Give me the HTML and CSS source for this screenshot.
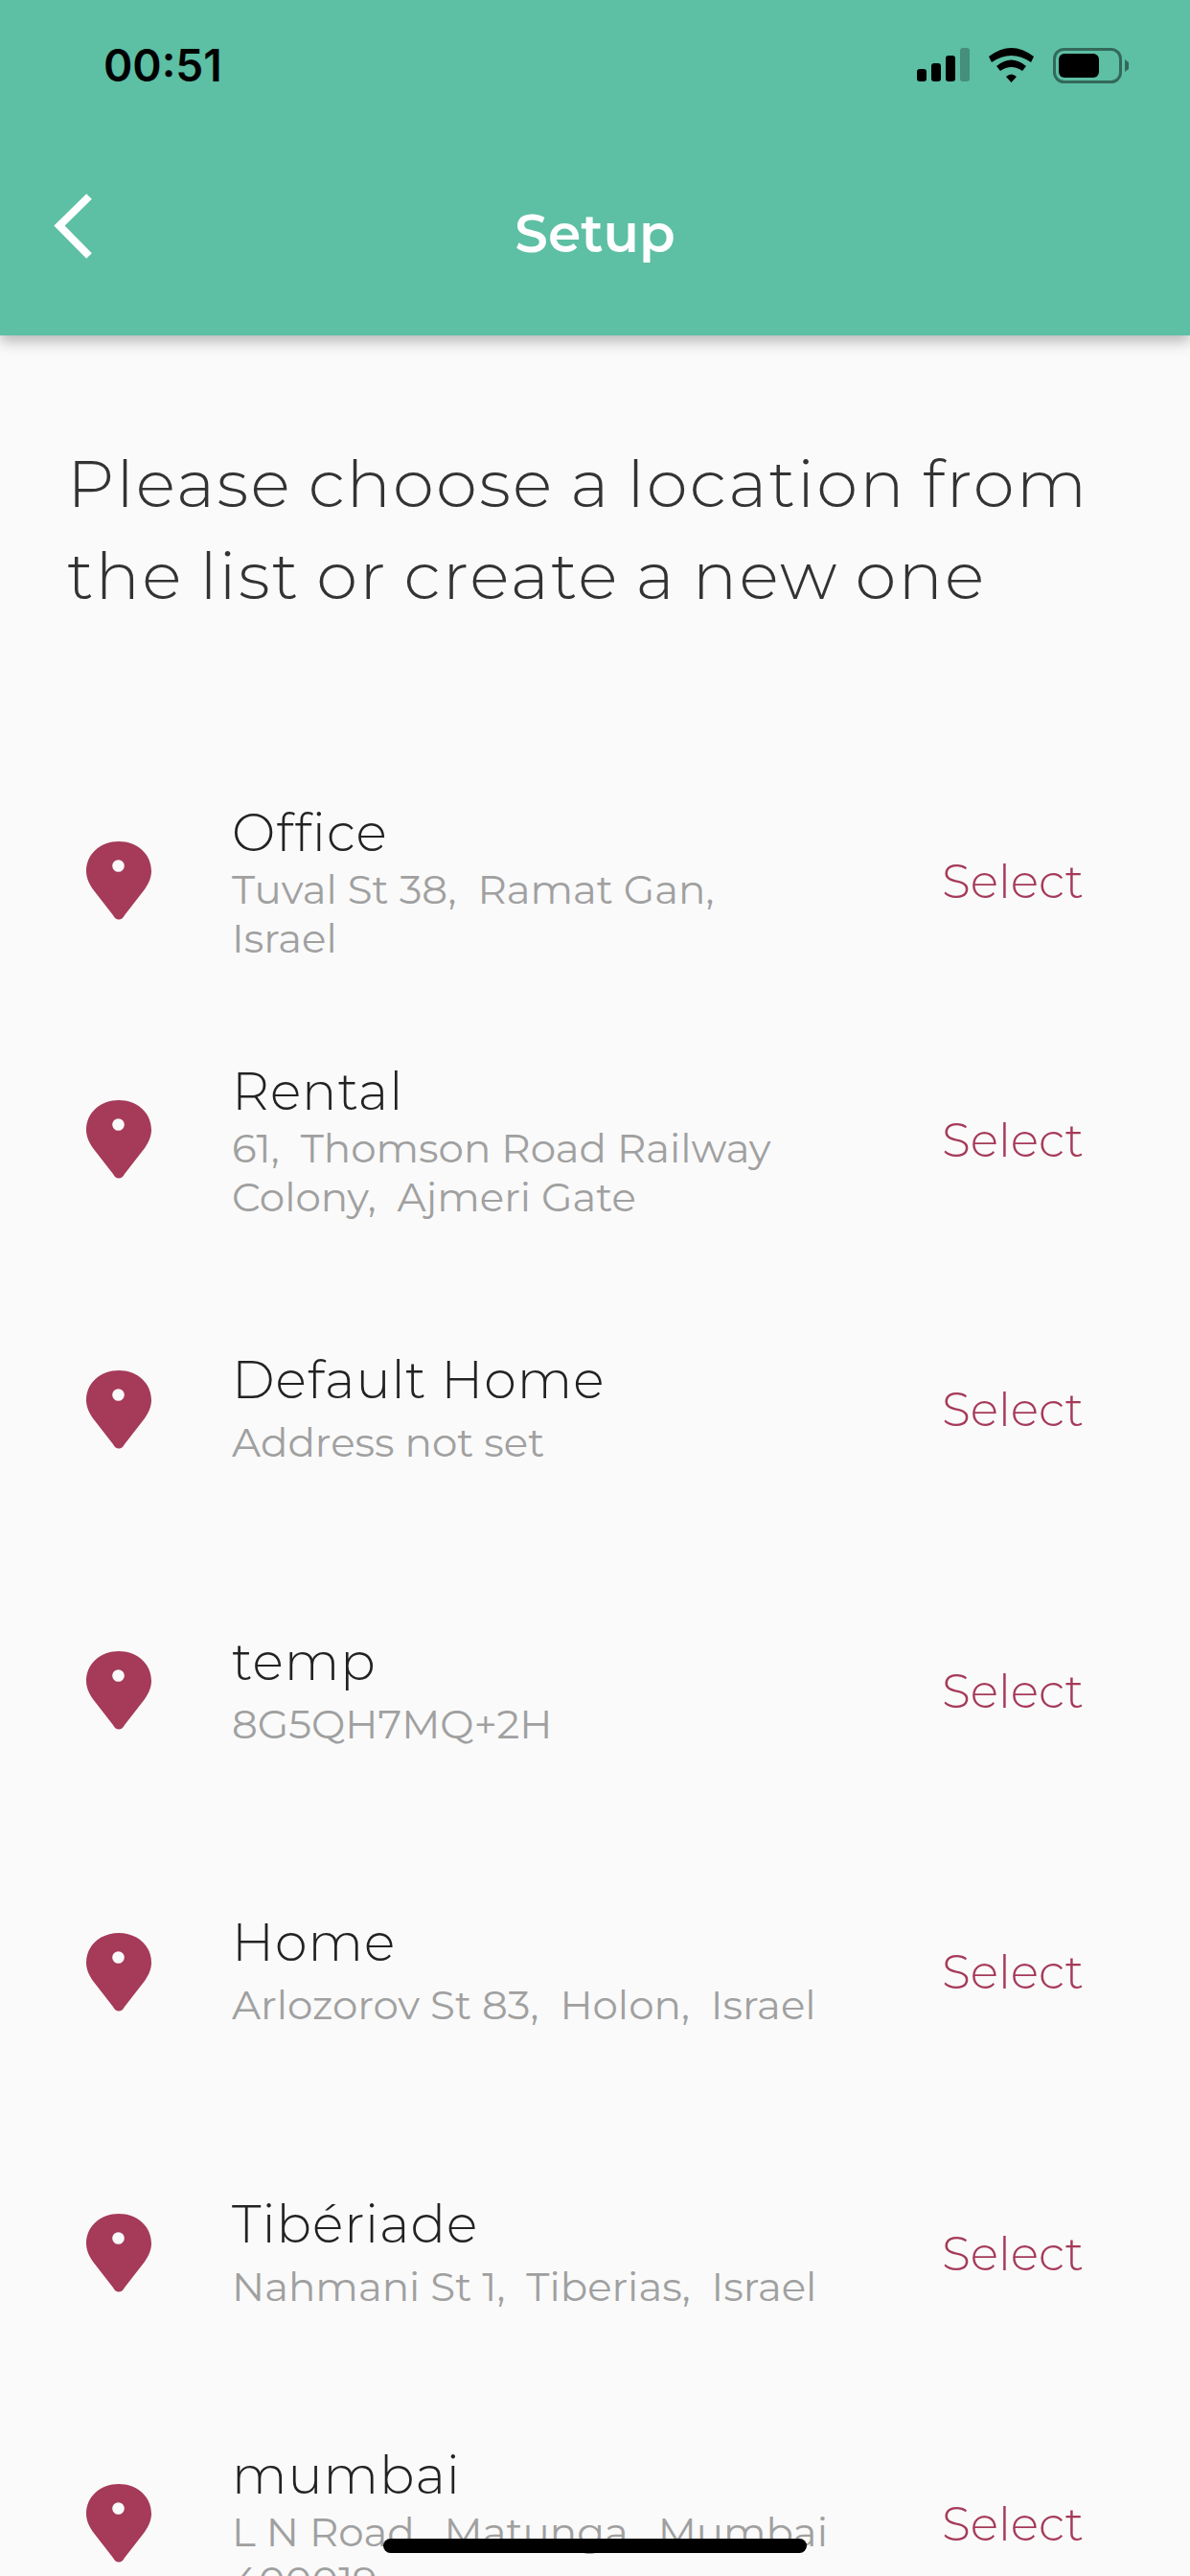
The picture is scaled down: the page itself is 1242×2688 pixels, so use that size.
FILE: index.html
```html
<!DOCTYPE html>
<html lang="en">
  <head>
    <meta charset="UTF-8" />
    <title>Setup</title>
    <link rel="stylesheet" href="styles.css">
  </head>
  <body>
    <svg class="defs" width="0" height="0">
      <symbol id="pin" viewBox="0 0 68 82">
        <path d="M34 0 C15 0 0 13 0 31 C0 38 3 44 7 50 L28 77 C31 83 37 83 40 77 L61 50 C65 44 68 38 68 31 C68 13 53 0 34 0 Z" fill="#a53a59"/>
        <circle cx="33.500" cy="25.500" r="6.300" fill="#fafafa"/>
      </symbol>
    </svg>

    <header class="app-header">
      <div class="status-bar">
        <span class="clock">00:51</span>
        <div class="status-icons">
          <svg width="55" height="36" viewBox="0 0 55 36"><rect x="0" y="22" width="10" height="13" rx="3" fill="#000"/><rect x="15" y="16" width="10" height="19" rx="3" fill="#000"/><rect x="30" y="8" width="10" height="27" rx="3" fill="#000"/><rect x="45" y="0" width="10" height="35" rx="3" fill="#000" opacity="0.25"/></svg>
          <svg width="47" height="36" viewBox="0 0 47 36"><path d="M0 9 Q23.500 -9 47 9 L44 15 Q23.500 1 3 15 Z M8 19 Q23.500 6 39 19 L35 24 Q23.500 16 12 24 Z M18 30 Q23.500 25 29 30 L23.500 36 Z" fill="#000"/></svg>
          <svg width="79" height="37" viewBox="0 0 79 37"><rect x="1.500" y="1.500" width="69" height="34" rx="10" fill="none" stroke="#000" stroke-opacity="0.45" stroke-width="3"/><rect x="6" y="6" width="42" height="25" rx="6" fill="#000"/><path d="M75 12 L79 15 V22 L75 25 Z" fill="#000" opacity="0.45"/></svg>
        </div>
      </div>
      <div class="nav-bar">
        <svg class="back" width="44" height="72" viewBox="0 0 44 72"><path d="M38 5 L7 35.500 L38 67" fill="none" stroke="#fff" stroke-width="8"/></svg>
        <h1 class="nav-title">Setup</h1>
      </div>
    </header>

    <main class="content">
      <p class="intro">Please choose a location from the list or create a new one</p>

      <ul class="locations">
        <li class="location two-line">
          <svg class="pin"><use href="#pin"/></svg>
          <div class="loc-text">
            <div class="loc-name">Office</div>
            <div class="loc-addr">Tuval St 38,&nbsp; Ramat Gan,<br>Israel</div>
          </div>
          <span class="select">Select</span>
        </li>
        <li class="location two-line">
          <svg class="pin"><use href="#pin"/></svg>
          <div class="loc-text">
            <div class="loc-name">Rental</div>
            <div class="loc-addr">61,&nbsp; Thomson Road Railway<br>Colony,&nbsp; Ajmeri Gate</div>
          </div>
          <span class="select">Select</span>
        </li>
        <li class="location">
          <svg class="pin"><use href="#pin"/></svg>
          <div class="loc-text">
            <div class="loc-name">Default Home</div>
            <div class="loc-addr">Address not set</div>
          </div>
          <span class="select">Select</span>
        </li>
        <li class="location">
          <svg class="pin"><use href="#pin"/></svg>
          <div class="loc-text">
            <div class="loc-name">temp</div>
            <div class="loc-addr">8G5QH7MQ+2H</div>
          </div>
          <span class="select">Select</span>
        </li>
        <li class="location">
          <svg class="pin"><use href="#pin"/></svg>
          <div class="loc-text">
            <div class="loc-name">Home</div>
            <div class="loc-addr">Arlozorov St 83,&nbsp; Holon,&nbsp; Israel</div>
          </div>
          <span class="select">Select</span>
        </li>
        <li class="location">
          <svg class="pin"><use href="#pin"/></svg>
          <div class="loc-text">
            <div class="loc-name">Tibériade</div>
            <div class="loc-addr">Nahmani St 1,&nbsp; Tiberias,&nbsp; Israel</div>
          </div>
          <span class="select">Select</span>
        </li>
        <li class="location two-line">
          <svg class="pin"><use href="#pin"/></svg>
          <div class="loc-text">
            <div class="loc-name">mumbai</div>
            <div class="loc-addr">L N Road,&nbsp; Matunga,&nbsp; Mumbai<br>400019</div>
          </div>
          <span class="select">Select</span>
        </li>
      </ul>
    </main>

    <div class="home-indicator"></div>
  </body>
</html>
```

FILE: styles.css
```css
html, body {
  margin: 0;
  padding: 0;
}

body {
  position: relative;
  width: 1242px;
  height: 2688px;
  overflow: hidden;
  background-color: #fafafa;
  font-family: 'Montserrat', 'Inter', 'Open Sans', sans-serif;
  color: #222;
}

.defs {
  position: absolute;
}

.app-header {
  height: 350px;
  background-color: #5dbfa4;
  box-shadow: 0 6px 14px rgba(0, 0, 0, 0.28);
}

.status-bar {
  display: flex;
  justify-content: space-between;
  align-items: center;
  height: 68px;
  padding: 34px 64px 0 108px;
}

.clock {
  font-family: 'Inter', sans-serif;
  font-size: 46px;
  font-weight: 600;
  color: #000;
}

.status-icons {
  display: flex;
  align-items: center;
  gap: 20px;
}

.nav-bar {
  display: grid;
  grid-template-columns: 1fr auto 1fr;
  align-items: center;
  height: 150px;
  margin-top: 66px;
}

.back {
  margin: 0 0 14px 55px;
}

.nav-title {
  margin: 0;
  font-size: 55px;
  font-weight: 600;
  color: #fff;
}

.content {
  padding-top: 106px;
}

.intro {
  width: 1100px;
  margin: 0;
  padding-left: 70px;
  font-size: 69px;
  font-weight: 300;
  line-height: 96px;
  letter-spacing: 2.15px;
  word-spacing: -3px;
  color: #333;
}

.locations {
  list-style: none;
  margin: 136px 0 0;
  padding: 0 111px 0 90px;
}

.location {
  display: flex;
  align-items: center;
  height: 293.5px;
}

.location.two-line {
  height: 270px;
}

.pin {
  flex: none;
  width: 68px;
  height: 82px;
  margin-right: 84px;
}

.loc-text {
  flex: 1;
}

.two-line .loc-text {
  padding-top: 6px;
}

.loc-name {
  font-size: 54px;
  font-weight: 300;
  line-height: 60px;
  letter-spacing: 1px;
}

.loc-addr {
  margin-top: 10px;
  font-size: 42px;
  font-weight: 400;
  line-height: 51px;
  color: #a0a0a0;
}

.two-line .loc-addr {
  margin-top: 4px;
}

.select {
  font-size: 49px;
  font-weight: 300;
  color: #a53a59;
}

.home-indicator {
  position: absolute;
  left: 400px;
  bottom: 24px;
  width: 442px;
  height: 15px;
  border-radius: 8px;
  background-color: #000;
}
```
